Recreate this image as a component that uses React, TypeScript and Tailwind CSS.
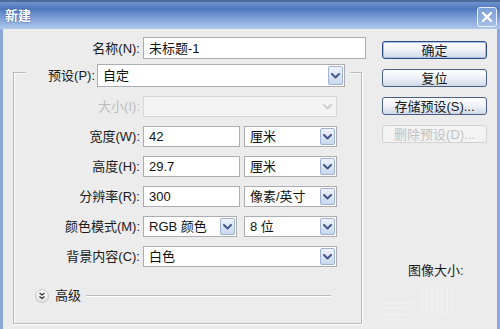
import React from "react";

const FONT = "font-['Liberation_Sans','Noto_Sans_CJK_SC',sans-serif]";

function Chevron({ color = "#44598a" }: { color?: string }) {
  return (
    <svg width="9" height="6" viewBox="0 0 9 6">
      <path d="M1 1 L4.5 4.5 L8 1" fill="none" stroke={color} strokeWidth="2" strokeLinecap="round" strokeLinejoin="round" />
    </svg>
  );
}

function Select({ className, value, disabled }: { className: string; value?: string; disabled?: boolean }) {
  return (
    <div
      className={
        "flex items-center border " +
        (disabled ? "bg-[#f3f3f3] border-[#d6d6d6] " : "bg-white border-[#abadb3] ") +
        className
      }
    >
      <span className="flex-1 pl-[5px] text-[13px] leading-none text-[#111] whitespace-nowrap">{value}</span>
      {disabled ? (
        <div className="w-[15px] h-[calc(100%-2px)] mr-[1px] flex items-center justify-center">
          <Chevron color="#c9ced6" />
        </div>
      ) : (
        <div className="w-[15px] h-[calc(100%-2px)] mr-[1px] flex items-center justify-center border border-[#9fb2d2] rounded-[2px] bg-[linear-gradient(to_bottom,#eef3fb,#c9d7ee)]">
          <Chevron />
        </div>
      )}
    </div>
  );
}

function Input({ className, value }: { className: string; value: string }) {
  return (
    <div className={"flex items-center bg-white border border-[#abadb3] " + className}>
      <span className="pl-[5px] text-[13px] leading-none text-[#111] whitespace-nowrap">{value}</span>
    </div>
  );
}

function Label({ children, className, disabled }: { children: React.ReactNode; className: string; disabled?: boolean }) {
  return (
    <div
      className={
        "text-right text-[13px] leading-none whitespace-nowrap " +
        (disabled ? "text-[#bcbcbc] " : "text-[#1a1a1a] ") +
        className
      }
    >
      {children}
    </div>
  );
}

function Button({ children, primary, disabled }: { children: React.ReactNode; primary?: boolean; disabled?: boolean }) {
  if (disabled) {
    return (
      <div className="h-[18px] w-[105px] flex items-center justify-center rounded-[3px] border border-[#d2d2d2] bg-[#f3f3f3] text-[13px] leading-none text-[#c2c2c2]">
        {children}
      </div>
    );
  }
  return (
    <div
      className={
        "h-[18px] w-[105px] flex items-center justify-center rounded-[3px] border text-[13px] leading-none text-[#1a1a1a] bg-[linear-gradient(to_bottom,#ffffff,#eef1f7_50%,#cfd9ea)] " +
        (primary
          ? "border-[#2c4a7e] shadow-[inset_0_0_0_1px_#a9c1e8]"
          : "border-[#4b5f82]")
      }
    >
      {children}
    </div>
  );
}

export default function App() {
  return (
    <div className={"w-[500px] h-[329px] overflow-hidden flex flex-col bg-[#ececec] " + FONT}>
      {/* Title bar */}
      <div className="h-[29px] shrink-0 flex items-center justify-between border-t-[2px] border-[#4d6a9c] bg-[linear-gradient(to_bottom,#6f93cf,#4f78bd_25%,#7fa1d8_60%,#b0c8ec)]">
        <span className="pl-[5px] text-[13px] font-bold text-white leading-none [text-shadow:0_0_2px_#2a4a80]">新建</span>
        <div className="mr-[3px] mt-[3px] w-[20px] h-[20px] rounded-[3px] border border-[#e8f0ff] bg-[linear-gradient(to_bottom,#7a9ed6,#a6bfe6)] flex items-center justify-center">
          <svg width="12" height="12" viewBox="0 0 12 12">
            <path d="M2 2 L10 10 M10 2 L2 10" stroke="white" strokeWidth="2.4" strokeLinecap="round" />
          </svg>
        </div>
      </div>

      {/* Body */}
      <div className="flex flex-1 border-l-[3px] border-r-[3px] border-[#89a7d8]">
        {/* Left column */}
        <div className="w-[363px] flex flex-col">
          <div className="flex items-center mt-[8px] h-[22px]">
            <Label className="w-[137px]">名称(N):</Label>
            <Input className="ml-[3px] w-[223px] h-[22px]" value="未标题-1" />
          </div>

          {/* Group box */}
          <div className="mt-[13px] ml-[10px] w-[349px] h-[252px] border border-[#b9b9b9] shadow-[inset_1px_1px_0_#ffffff,1px_1px_0_#ffffff] flex flex-col">
            <div className="-mt-[9px] ml-[12px] w-[324px] h-[23px] bg-[#ececec] flex items-center">
              <Label className="w-[69px]">预设(P):</Label>
              <Select className="ml-[2px] w-[248px] h-[23px]" value="自定" />
            </div>

            <div className="flex flex-col gap-[9px] mt-[9px]">
              <div className="flex items-center h-[21px]">
                <Label className="w-[126px]" disabled>大小(I):</Label>
                <Select className="ml-[3px] w-[194px] h-[21px]" disabled />
              </div>
              <div className="flex items-center h-[21px]">
                <Label className="w-[126px]">宽度(W):</Label>
                <Input className="ml-[3px] w-[97px] h-[21px]" value="42" />
                <Select className="ml-[4px] w-[93px] h-[21px]" value="厘米" />
              </div>
              <div className="flex items-center h-[21px]">
                <Label className="w-[126px]">高度(H):</Label>
                <Input className="ml-[3px] w-[97px] h-[21px]" value="29.7" />
                <Select className="ml-[4px] w-[93px] h-[21px]" value="厘米" />
              </div>
              <div className="flex items-center h-[21px]">
                <Label className="w-[126px]">分辨率(R):</Label>
                <Input className="ml-[3px] w-[97px] h-[21px]" value="300" />
                <Select className="ml-[4px] w-[93px] h-[21px]" value="像素/英寸" />
              </div>
              <div className="flex items-center h-[21px]">
                <Label className="w-[126px]">颜色模式(M):</Label>
                <Select className="ml-[3px] w-[94px] h-[21px]" value="RGB 颜色" />
                <Select className="ml-[7px] w-[93px] h-[21px]" value="8 位" />
              </div>
              <div className="flex items-center h-[21px]">
                <Label className="w-[126px]">背景内容(C):</Label>
                <Select className="ml-[3px] w-[194px] h-[21px]" value="白色" />
              </div>
            </div>

            <div className="flex items-center mt-[21px] ml-[21px] mr-[30px] h-[15px]">
              <div className="w-[14px] h-[14px] rounded-full border border-[#c4c4c4] bg-[linear-gradient(to_bottom,#ffffff,#e2e2e2)] flex items-center justify-center">
                <svg width="8" height="8" viewBox="0 0 8 8">
                  <path d="M1.5 1 L4 3 L6.5 1 M1.5 4.5 L4 6.5 L6.5 4.5" fill="none" stroke="#333" strokeWidth="1.3" />
                </svg>
              </div>
              <span className="ml-[6px] text-[13px] leading-none text-[#1a1a1a]">高级</span>
              <div className="ml-[5px] flex-1 h-[2px] border-t border-[#bdbdbd] border-b border-b-white" />
            </div>
          </div>
        </div>

        {/* Right column */}
        <div className="ml-[16px] flex flex-col">
          <div className="mt-[12px] flex flex-col gap-[10px]">
            <Button primary>确定</Button>
            <Button>复位</Button>
            <Button>存储预设(S)...</Button>
            <Button disabled>删除预设(D)...</Button>
          </div>
          <div className="mt-[121px] ml-[26px] text-[13px] leading-none text-[#1a1a1a]">图像大小:</div>
          <svg className="mt-[8px]" width="105" height="40" viewBox="0 0 105 40">
            <g stroke="#f1f1f1" strokeWidth="1.5">
              <path d="M40 6 V30 M45 2 V30 M50 2 V30 M55 2 V30 M60 2 V30 M65 2 V30 M70 6 V30" />
              <path d="M2 18 H32 M2 23 H24 M2 29 H22 M2 35 H30" />
            </g>
          </svg>
        </div>
      </div>
    </div>
  );
}
